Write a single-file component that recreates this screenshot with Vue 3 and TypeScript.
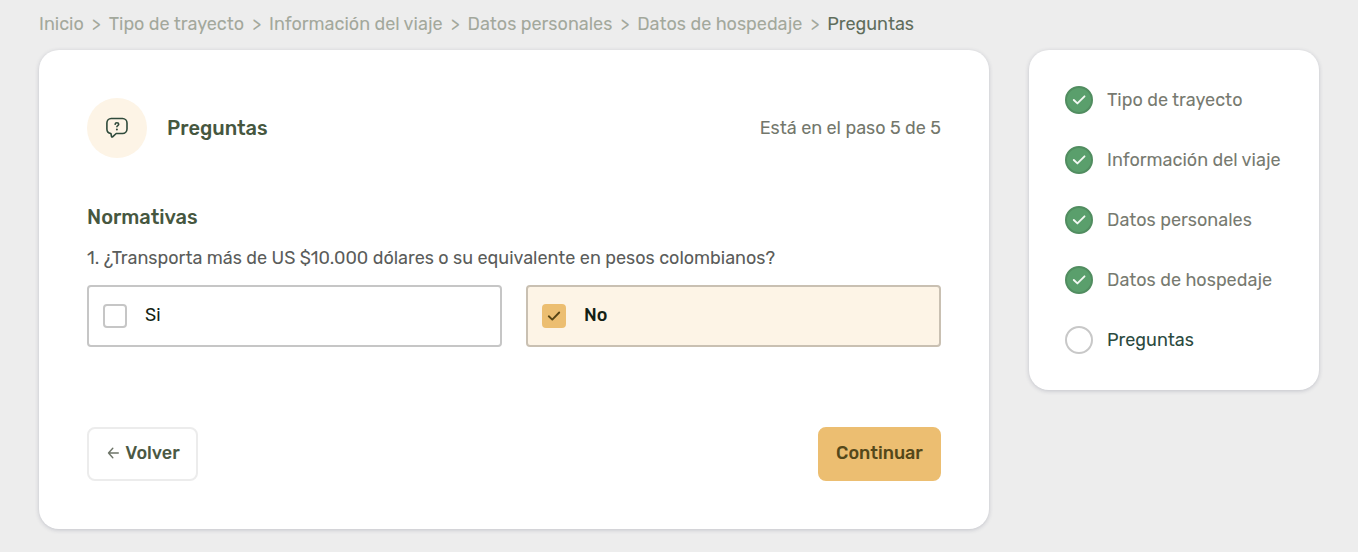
<script setup lang="ts">
import { ref } from 'vue'

interface Step {
  label: string
  done: boolean
}

const steps: Step[] = [
  { label: 'Tipo de trayecto', done: true },
  { label: 'Información del viaje', done: true },
  { label: 'Datos personales', done: true },
  { label: 'Datos de hospedaje', done: true },
  { label: 'Preguntas', done: false },
]

const crumbs: string[] = ['Inicio', ...steps.map((step) => step.label)]

const options: string[] = ['Si', 'No']
const answer = ref<string>('No')
</script>

<template>
  <div class="page">
    <nav class="breadcrumb" aria-label="Ruta">
      <template v-for="(crumb, i) in crumbs" :key="crumb">
        <span v-if="i > 0" class="separator" aria-hidden="true">&gt;</span>
        <a href="#" :class="{ current: i === crumbs.length - 1 }">{{ crumb }}</a>
      </template>
    </nav>

    <div class="columns">
      <main class="card form-card">
        <header class="heading">
          <span class="badge">
            <svg width="24" height="24" viewBox="0 0 24 24" fill="none" stroke="#2f4a3b" stroke-width="1.6" stroke-linecap="round" stroke-linejoin="round" aria-hidden="true">
              <path d="M6.200 2.500h11.300a4.500 4.500 0 0 1 4.500 4.500v6a4.500 4.500 0 0 1-4.500 4.500h-6.300l-3.600 3.300q-.8.6-1.100-.4l-.6-2.900A4.500 4.500 0 0 1 1.900 13V7A4.500 4.500 0 0 1 6.200 2.500Z" />
              <path d="M10.100 8.300c.1-1 .8-1.500 1.800-1.500s1.800.6 1.800 1.500c0 1.200-1.800 1.300-1.800 2.500" />
              <path d="M11.900 13.500v.1" stroke-width="2" />
            </svg>
          </span>
          <h1>Preguntas</h1>
          <p class="progress">Está en el paso 5 de 5</p>
        </header>

        <h2>Normativas</h2>
        <fieldset>
          <legend>1. ¿Transporta más de US $10.000 dólares o su equivalente en pesos colombianos?</legend>
          <div class="options">
            <label v-for="option in options" :key="option" class="option" :class="{ selected: answer === option }">
              <span class="tick">
                <input type="checkbox" :checked="answer === option" @change="answer = option" />
                <svg v-if="answer === option" width="24" height="24" viewBox="0 0 24 24" fill="none" stroke="#574515" stroke-width="1.900" stroke-linecap="round" stroke-linejoin="round" aria-hidden="true">
                  <path d="M6.800 12.300l3.500 3.300 6.900-7.100" />
                </svg>
              </span>
              <span class="option-text">{{ option }}</span>
            </label>
          </div>
        </fieldset>

        <footer class="actions">
          <button type="button" class="back">
            <svg width="12" height="12" viewBox="0 0 12 12" fill="none" stroke="#6d7468" stroke-width="1.400" stroke-linecap="round" stroke-linejoin="round" aria-hidden="true">
              <path d="M11.300 6H1.500M5.800 1.300 1.500 6l4.300 4.700" />
            </svg>
            Volver
          </button>
          <button type="button" class="next">Continuar</button>
        </footer>
      </main>

      <aside class="card">
        <ol>
          <li v-for="step in steps" :key="step.label" :class="{ done: step.done }">
            <span class="marker">
              <svg v-if="step.done" width="24" height="24" viewBox="0 0 24 24" fill="none" stroke="#f1f8f2" stroke-width="1.900" stroke-linecap="round" stroke-linejoin="round" aria-hidden="true">
                <path d="M6.800 12l3.600 3.400 7.100-7.100" />
              </svg>
            </span>
            {{ step.label }}
          </li>
        </ol>
      </aside>
    </div>
  </div>
</template>

<style>
body {
  margin: 0;
  background: #ededed;
}
</style>

<style scoped>
.page {
  box-sizing: border-box;
  padding: 12px 39px 22px;
  font-family: Rubik, Roboto, "Liberation Sans", sans-serif;
  font-size: 18px;
  line-height: 24px;
  color: #73776c;
}
.breadcrumb {
  display: flex;
  gap: 8px;
  margin-bottom: 14px;
  color: #a3a89c;
}
.breadcrumb a {
  color: inherit;
  text-decoration: none;
}
.breadcrumb .current {
  color: #606d5c;
}
.columns {
  display: grid;
  grid-template-columns: minmax(0, 1fr) 290px;
  gap: 40px;
  align-items: start;
}
.card {
  background: #fff;
  border-radius: 20px;
  box-shadow: 0 1px 4px rgba(60, 64, 90, 0.24);
}
.form-card {
  padding: 48px;
}
.heading {
  display: flex;
  align-items: center;
  gap: 20px;
  margin-bottom: 47px;
}
.badge {
  display: grid;
  place-items: center;
  width: 60px;
  height: 60px;
  border-radius: 50%;
  background: #fdf4e6;
}
h1,
h2 {
  margin: 0;
  font-size: 20px;
  line-height: 24px;
  font-weight: 500;
  color: #46573f;
}
.progress {
  margin: 0 0 0 auto;
}
fieldset {
  margin: 0;
  padding: 0;
  border: 0;
  min-width: 0;
}
legend {
  padding: 17px 0 15px;
  color: #5a5c5a;
}
.options {
  display: grid;
  grid-template-columns: 1fr 1fr;
  gap: 24px;
}
.option {
  display: flex;
  align-items: center;
  gap: 18px;
  box-sizing: border-box;
  height: 62px;
  padding: 0 14px;
  border: 2px solid #c6c6c6;
  border-radius: 4px;
  color: #141f14;
}
.option.selected {
  border-color: #c9c0b2;
  background: #fdf4e6;
  font-weight: 500;
}
.option-text {
  padding-bottom: 2px;
}
.tick {
  display: grid;
}
.tick > * {
  grid-area: 1 / 1;
}
.tick svg {
  pointer-events: none;
}
input {
  appearance: none;
  box-sizing: border-box;
  width: 24px;
  height: 24px;
  margin: 0;
  border: 2px solid #c6c6c6;
  border-radius: 4px;
  background: #fff;
}
input:checked {
  border-color: #ecbe71;
  background: #ecbe71;
}
.actions {
  display: flex;
  justify-content: space-between;
  margin-top: 80px;
}
button {
  display: flex;
  align-items: center;
  justify-content: center;
  box-sizing: border-box;
  height: 54px;
  padding: 0 16px 2px;
  border: 2px solid #ecbe71;
  border-radius: 8px;
  background: #ecbe71;
  font: inherit;
  font-weight: 500;
  color: #54481a;
}
.back {
  gap: 6px;
  min-width: 111px;
  padding-left: 18px;
  border-color: #ececec;
  background: #fff;
  color: #4b5944;
}
.next {
  min-width: 123px;
}
ol {
  margin: 0;
  padding: 20px 36px;
  list-style: none;
}
li {
  display: flex;
  align-items: center;
  gap: 14px;
  height: 60px;
  color: #2b4a40;
}
li.done {
  color: #777a70;
}
.marker {
  display: grid;
  place-items: center;
  box-sizing: border-box;
  width: 28px;
  height: 28px;
  border: 2px solid #c8c8c8;
  border-radius: 50%;
}
.done .marker {
  border-color: #518d60;
  background: #5a9f6c;
}
</style>
